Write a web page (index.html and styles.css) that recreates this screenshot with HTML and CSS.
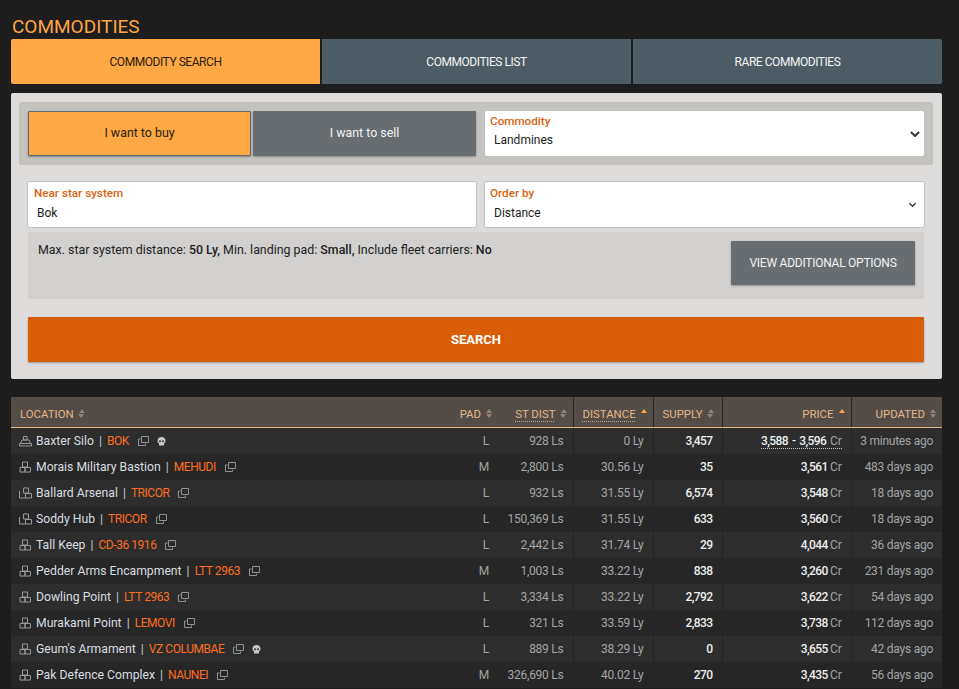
FILE: index.html
```html
<!DOCTYPE html>
<html lang="en">
<head>
    <meta charset="UTF-8">
    <meta name="viewport" content="width=device-width, initial-scale=1.0">
    <title>Commodities</title>
    <link rel="stylesheet" href="styles.css">
</head>
<body>
    <svg class="defs" width="0" height="0" aria-hidden="true">
        <symbol id="pad-port" viewBox="0 0 13 12"><path d="M4.500 1.500h3.500v3.500h-3.500zM3 5h7l1.500 3.500h-10zM.5 8.500h12v2.500H.5z" fill="none" stroke="currentColor"/></symbol>
        <symbol id="pad-a" viewBox="0 0 13 12"><path d="M3.500 1h5v5h-5zM1 6.500h5V11H1zM6 6.500h5.500V11H6z" fill="none" stroke="currentColor"/></symbol>
        <symbol id="pad-b" viewBox="0 0 13 12"><path d="M4.500 1h5v5h-5zM.5 4v7h6V6M6.500 6.500h6V11h-6z" fill="none" stroke="currentColor"/></symbol>
        <symbol id="copy" viewBox="0 0 11 10"><path d="M3.500.5h7v6h-7z" fill="none" stroke="currentColor"/><path d="M2.500 3H.5v6.500h7V7.500" fill="none" stroke="currentColor"/></symbol>
        <symbol id="skull" viewBox="0 0 9 9"><path fill-rule="evenodd" d="M4.500 0C6.900 0 8.500 1.500 8.500 3.800c0 1.400-.6 2.300-1.500 2.800V8.500H2V6.600C1.100 6.100.5 5.200.5 3.800.5 1.500 2.100 0 4.500 0zM3 3.300a1 1 0 1 0 0 2 1 1 0 0 0 0-2zM6 3.300a1 1 0 1 0 0 2 1 1 0 0 0 0-2z" fill="currentColor"/></symbol>
    </svg>

    <h1 class="title">COMMODITIES</h1>

    <nav class="tabs">
        <a class="tab tab-active">COMMODITY SEARCH</a>
        <a class="tab">COMMODITIES LIST</a>
        <a class="tab">RARE COMMODITIES</a>
    </nav>

    <form class="panel">
        <div class="group">
            <div class="toggle">
                <button type="button" class="toggle-btn toggle-on">I want to buy</button>
                <button type="button" class="toggle-btn">I want to sell</button>
            </div>
            <label class="field field-flat">
                <span class="field-label">Commodity</span>
                <select class="field-input"><option>Landmines</option></select>
                <svg class="chevron chevron-bold" viewBox="0 0 10 6"><path d="M1 1l4 4 4-4" fill="none" stroke="currentColor" stroke-width="2"/></svg>
            </label>
        </div>

        <div class="fields">
            <label class="field">
                <span class="field-label">Near star system</span>
                <input class="field-input" type="text" value="Bok">
            </label>
            <label class="field">
                <span class="field-label">Order by</span>
                <select class="field-input"><option>Distance</option></select>
                <svg class="chevron" viewBox="0 0 10 6"><path d="M1.500 1l3.500 3.500L8.500 1" fill="none" stroke="currentColor" stroke-width="1.500"/></svg>
            </label>
        </div>

        <div class="options">
            <p class="options-text">Max. star system distance: <b>50 Ly,</b> Min. landing pad: <b>Small,</b> Include fleet carriers: <b>No</b></p>
            <button type="button" class="options-btn">VIEW ADDITIONAL OPTIONS</button>
        </div>

        <button type="button" class="search-btn">SEARCH</button>
    </form>

    <table class="results">
        <colgroup>
            <col class="col-location"><col class="col-pad"><col class="col-st"><col class="col-dist"><col class="col-supply"><col class="col-price"><col class="col-updated">
        </colgroup>
        <thead>
            <tr>
                <th class="left">LOCATION<i class="sort"></i></th>
                <th>PAD<i class="sort"></i></th>
                <th><u>ST DIST</u><i class="sort"></i></th>
                <th class="left sep"><u>DISTANCE</u><i class="sort sort-up"></i></th>
                <th class="left sep">SUPPLY<i class="sort"></i></th>
                <th class="sep">PRICE<i class="sort sort-up"></i></th>
                <th class="sep">UPDATED<i class="sort"></i></th>
            </tr>
        </thead>
        <tbody>
            <tr>
                <td class="loc"><svg class="pad-icon"><use href="#pad-port"/></svg>Baxter Silo <span class="bar">|</span> <a>BOK</a><svg class="copy"><use href="#copy"/></svg><svg class="skull"><use href="#skull"/></svg></td>
                <td class="dim">L</td><td class="dim">928 Ls</td><td class="dim sep">0 Ly</td><td class="num sep">3,457</td>
                <td class="num sep"><span class="range">3,588 - 3,596 <small>Cr</small></span></td><td class="dim sep">3 minutes ago</td>
            </tr>
            <tr>
                <td class="loc"><svg class="pad-icon"><use href="#pad-a"/></svg>Morais Military Bastion <span class="bar">|</span> <a>MEHUDI</a><svg class="copy"><use href="#copy"/></svg></td>
                <td class="dim">M</td><td class="dim">2,800 Ls</td><td class="dim sep">30.56 Ly</td><td class="num sep">35</td>
                <td class="num sep">3,561 <small>Cr</small></td><td class="dim sep">483 days ago</td>
            </tr>
            <tr>
                <td class="loc"><svg class="pad-icon"><use href="#pad-b"/></svg>Ballard Arsenal <span class="bar">|</span> <a>TRICOR</a><svg class="copy"><use href="#copy"/></svg></td>
                <td class="dim">L</td><td class="dim">932 Ls</td><td class="dim sep">31.55 Ly</td><td class="num sep">6,574</td>
                <td class="num sep">3,548 <small>Cr</small></td><td class="dim sep">18 days ago</td>
            </tr>
            <tr>
                <td class="loc"><svg class="pad-icon"><use href="#pad-b"/></svg>Soddy Hub <span class="bar">|</span> <a>TRICOR</a><svg class="copy"><use href="#copy"/></svg></td>
                <td class="dim">L</td><td class="dim">150,369 Ls</td><td class="dim sep">31.55 Ly</td><td class="num sep">633</td>
                <td class="num sep">3,560 <small>Cr</small></td><td class="dim sep">18 days ago</td>
            </tr>
            <tr>
                <td class="loc"><svg class="pad-icon"><use href="#pad-a"/></svg>Tall Keep <span class="bar">|</span> <a>CD-36 1916</a><svg class="copy"><use href="#copy"/></svg></td>
                <td class="dim">L</td><td class="dim">2,442 Ls</td><td class="dim sep">31.74 Ly</td><td class="num sep">29</td>
                <td class="num sep">4,044 <small>Cr</small></td><td class="dim sep">36 days ago</td>
            </tr>
            <tr>
                <td class="loc"><svg class="pad-icon"><use href="#pad-a"/></svg>Pedder Arms Encampment <span class="bar">|</span> <a>LTT 2963</a><svg class="copy"><use href="#copy"/></svg></td>
                <td class="dim">M</td><td class="dim">1,003 Ls</td><td class="dim sep">33.22 Ly</td><td class="num sep">838</td>
                <td class="num sep">3,260 <small>Cr</small></td><td class="dim sep">231 days ago</td>
            </tr>
            <tr>
                <td class="loc"><svg class="pad-icon"><use href="#pad-a"/></svg>Dowling Point <span class="bar">|</span> <a>LTT 2963</a><svg class="copy"><use href="#copy"/></svg></td>
                <td class="dim">L</td><td class="dim">3,334 Ls</td><td class="dim sep">33.22 Ly</td><td class="num sep">2,792</td>
                <td class="num sep">3,622 <small>Cr</small></td><td class="dim sep">54 days ago</td>
            </tr>
            <tr>
                <td class="loc"><svg class="pad-icon"><use href="#pad-a"/></svg>Murakami Point <span class="bar">|</span> <a>LEMOVI</a><svg class="copy"><use href="#copy"/></svg></td>
                <td class="dim">L</td><td class="dim">321 Ls</td><td class="dim sep">33.59 Ly</td><td class="num sep">2,833</td>
                <td class="num sep">3,738 <small>Cr</small></td><td class="dim sep">112 days ago</td>
            </tr>
            <tr>
                <td class="loc"><svg class="pad-icon"><use href="#pad-a"/></svg>Geum's Armament <span class="bar">|</span> <a>VZ COLUMBAE</a><svg class="copy"><use href="#copy"/></svg><svg class="skull"><use href="#skull"/></svg></td>
                <td class="dim">L</td><td class="dim">889 Ls</td><td class="dim sep">38.29 Ly</td><td class="num sep">0</td>
                <td class="num sep">3,655 <small>Cr</small></td><td class="dim sep">42 days ago</td>
            </tr>
            <tr>
                <td class="loc"><svg class="pad-icon"><use href="#pad-a"/></svg>Pak Defence Complex <span class="bar">|</span> <a>NAUNEI</a><svg class="copy"><use href="#copy"/></svg></td>
                <td class="dim">M</td><td class="dim">326,690 Ls</td><td class="dim sep">40.02 Ly</td><td class="num sep">270</td>
                <td class="num sep">3,435 <small>Cr</small></td><td class="dim sep">56 days ago</td>
            </tr>
        </tbody>
    </table>
</body>
</html>
```

FILE: styles.css
```css
body {
    margin: 0;
    padding: 14px 17px 0 11px;
    background-color: #1d1d1d;
    font-family: "Roboto", "Noto Sans", sans-serif;
    font-size: 12.400px;
    color: #222;
}

.defs {
    position: absolute;
}

.title {
    margin: 0 0 0 1px;
    font-size: 19px;
    font-weight: 400;
    line-height: 25px;
    color: #ffa545;
}

/* Tabs */
.tabs {
    display: grid;
    grid-template-columns: repeat(3, 1fr);
    gap: 2px;
    margin-bottom: 9px;
}

.tab {
    height: 45px;
    line-height: 46px;
    text-align: center;
    font-size: 12px;
    letter-spacing: -0.45px;
    background-color: #4d5b64;
    color: #f2f4f5;
}

.tab:first-child {
    border-radius: 2px 0 0 2px;
}

.tab:last-child {
    border-radius: 0 2px 2px 0;
}

.tab-active {
    background-color: #ffa846;
    color: #2a1c0a;
}

/* Search form */
.panel {
    display: block;
    padding: 9px 9px 17px 8px;
    margin-bottom: 18px;
    background-color: #dddcda;
    border-radius: 2px;
}

.panel b {
    font-weight: 500;
}

.group {
    display: grid;
    grid-template-columns: 448px 1fr;
    gap: 9px;
    padding: 9px;
    background-color: #c4c3bf;
    border-radius: 2px;
}

.toggle {
    display: grid;
    grid-template-columns: 1fr 1fr;
    gap: 2px;
}

.toggle-btn {
    height: 45px;
    padding: 0 0 2px;
    border: 0;
    font: inherit;
    background-color: #676d70;
    color: #f2f4f5;
    border-radius: 1px;
    box-shadow: 0 1px 2px rgba(0, 0, 0, 0.3);
}

.toggle-on {
    background-color: #ffa846;
    color: #2a1c0a;
    border: 1px solid #5f6a70;
}

.field {
    position: relative;
    display: block;
    height: 45px;
    padding: 0 6px 0 5px;
    background-color: #fff;
    border-radius: 2px;
}

.fields {
    display: grid;
    grid-template-columns: 450px 441px;
    gap: 7px;
    margin: 16px 0 4px 8px;
}

.fields .field {
    border: 1px solid #c2c2c0;
}

.fields .field:first-child {
    padding-left: 6px;
}

.fields .field-label {
    padding-top: 4px;
    padding-bottom: 1px;
}

.field-label {
    display: block;
    padding-top: 3px;
    line-height: 15px;
    font-size: 11.700px;
    font-weight: 500;
    color: #dc6312;
}

.field-input {
    display: block;
    width: 100%;
    height: 22px;
    padding: 0 0 0 4px;
    border: 0;
    outline: 0;
    background: none;
    appearance: none;
    font: inherit;
    font-size: 12px;
    color: #1c1c1c;
}

input.field-input {
    padding-left: 3px;
}

.chevron {
    position: absolute;
    right: 7px;
    top: 20px;
    width: 9px;
    height: 6px;
    color: #333;
}

.chevron-bold {
    width: 10px;
    right: 4px;
}

.options {
    display: flex;
    justify-content: space-between;
    box-sizing: border-box;
    width: 896px;
    height: 67px;
    margin-left: 9px;
    padding: 9px 9px 0 10px;
    background-color: #d1d0ce;
    border-radius: 2px;
}

.options-text {
    margin: 0;
    line-height: 18px;
}

.options-btn {
    width: 184px;
    height: 44px;
    border: 0;
    border-radius: 1px;
    font: inherit;
    font-size: 12px;
    letter-spacing: -0.25px;
    background-color: #676d70;
    color: #f2f4f5;
    box-shadow: 0 1px 2px rgba(0, 0, 0, 0.3);
}

.search-btn {
    display: block;
    width: 896px;
    height: 45px;
    margin: 18px 0 0 9px;
    border: 0;
    border-radius: 1px;
    font: inherit;
    font-size: 13px;
    font-weight: 700;
    background-color: #d85d06;
    color: #fff;
    box-shadow: 0 1px 2px rgba(0, 0, 0, 0.3);
}

/* Results table */
.results {
    width: 931px;
    table-layout: fixed;
    border-collapse: collapse;
    font-size: 12.200px;
    color: #d8dde0;
}

.col-location { width: 439px; }
.col-pad { width: 48px; }
.col-st { width: 75px; }
.col-dist { width: 80px; }
.col-supply { width: 69px; }
.col-price { width: 129px; }
.col-updated { width: 91px; }

.results th {
    height: 30px;
    padding: 4px 6px 0 9px;
    box-sizing: border-box;
    text-align: right;
    white-space: nowrap;
    font-size: 11.400px;
    font-weight: 400;
    background-color: #544c46;
    color: #e2b68a;
    border-bottom: 1px solid #e5b585;
}

.results th.left {
    text-align: left;
}

.results th u {
    text-decoration: underline dotted #b9a48f;
    text-underline-offset: 3px;
}

.results th.sep,
.results td.sep {
    border-left: 1px solid #242424;
}

/* Sort arrows: the element is the upper triangle, ::after the lower one */
.sort {
    position: relative;
    display: inline-block;
    vertical-align: 5px;
    width: 0;
    margin-left: 5px;
    border: 3.500px solid transparent;
    border-top: 0;
    border-bottom: 4px solid #8e8279;
}

.sort::after {
    content: "";
    position: absolute;
    left: -3.500px;
    top: 5px;
    border: 3.500px solid transparent;
    border-bottom: 0;
    border-top: 4px solid #8e8279;
}

.sort-up {
    border-bottom-color: #ffa545;
}

.sort-up::after {
    display: none;
}

.results td {
    height: 26px;
    padding: 0 9px 0 4px;
    box-sizing: border-box;
    text-align: right;
    white-space: nowrap;
    background-color: #2d2d2d;
}

.results tbody tr:first-child td {
    height: 27px;
}

.results tr:nth-child(even) td {
    background-color: #262626;
}

.results td.loc {
    padding-left: 8px;
    text-align: left;
}

.results td.dim {
    font-size: 12px;
    letter-spacing: -0.25px;
    color: #a3a5a6;
}

.results td.num {
    font-size: 12px;
    font-weight: 500;
    letter-spacing: -0.6px;
    color: #eceeef;
}

.results td small {
    font-size: 12px;
    font-weight: 400;
    letter-spacing: -0.25px;
    color: #a3a5a6;
}

.range {
    word-spacing: 1.500px;
    border-bottom: 1px dotted #c9c9c9;
}

.loc a {
    font-size: 12px;
    letter-spacing: -0.45px;
    color: #ff6d1f;
}

.bar {
    margin: 0 2px;
    color: #c0ccd6;
}

.pad-icon {
    width: 13px;
    height: 12px;
    margin-right: 4px;
    vertical-align: -2px;
    color: #96989a;
}

.copy {
    width: 11px;
    height: 10px;
    margin-left: 9px;
    vertical-align: -1px;
    color: #8f9193;
}

.skull {
    width: 9px;
    height: 9px;
    margin-left: 8px;
    vertical-align: -1px;
    color: #c9c9c9;
}
```
